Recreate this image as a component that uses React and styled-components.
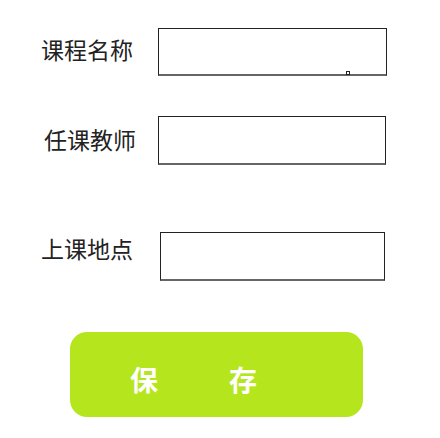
import React from 'react';
import styled, { createGlobalStyle } from 'styled-components';

const GlobalStyle = createGlobalStyle`
body {
    margin: 0;
    background: #ffffff;
    font-family: "Noto Sans CJK SC", "Noto Sans", sans-serif;
}
`

const Form = styled.div`
display: flex;
flex-direction: column;
width: 440px;
height: 438px;
padding-top: 28px;
box-sizing: border-box;
`

const Row = styled.div`
display: flex;
align-items: flex-start;
margin-top: ${p => p.top}px;
`

const Label = styled.div`
width: ${p => p.width}px;
padding-left: ${p => p.indent}px;
margin-top: ${p => p.shift}px;
box-sizing: border-box;
font-size: 23px;
line-height: 1;
color: #222;
white-space: nowrap;
`

const Field = styled.div`
position: relative;
width: ${p => p.width}px;
`

const Input = styled.input`
display: block;
width: 100%;
height: ${p => p.height}px;
box-sizing: border-box;
border: 1px solid #222;
border-bottom: 2px solid #666;
outline: none;
padding: 0 8px;
font-size: 18px;
font-family: inherit;
`

const Handle = styled.span`
position: absolute;
left: 188px;
bottom: 1px;
width: 2px;
height: 2px;
border: 1px solid #222;
background: #fff;
`

const SaveButton = styled.button`
display: flex;
align-items: center;
gap: 71px;
margin: 51px 0 0 70px;
width: 293px;
height: 85px;
padding: 8px 0 0 60px;
box-sizing: border-box;
border: none;
border-radius: 17px;
background: #b5e61d;
color: #fff;
font-family: "Noto Sans CJK SC", sans-serif;
font-size: 28px;
font-weight: 700;
cursor: pointer;
`

export default function App() {
    return (
        <Form>
            <GlobalStyle />
            <Row top={0}>
                <Label width={158} indent={41} shift={10}>课程名称</Label>
                <Field width={229}>
                    <Input height={48} />
                    <Handle />
                </Field>
            </Row>
            <Row top={40}>
                <Label width={158} indent={44} shift={12}>任课教师</Label>
                <Field width={228}>
                    <Input height={49} />
                </Field>
            </Row>
            <Row top={67}>
                <Label width={160} indent={41} shift={5}>上课地点</Label>
                <Field width={225}>
                    <Input height={49} />
                </Field>
            </Row>
            <SaveButton>
                <span>保</span>
                <span>存</span>
            </SaveButton>
        </Form>
    );
}
